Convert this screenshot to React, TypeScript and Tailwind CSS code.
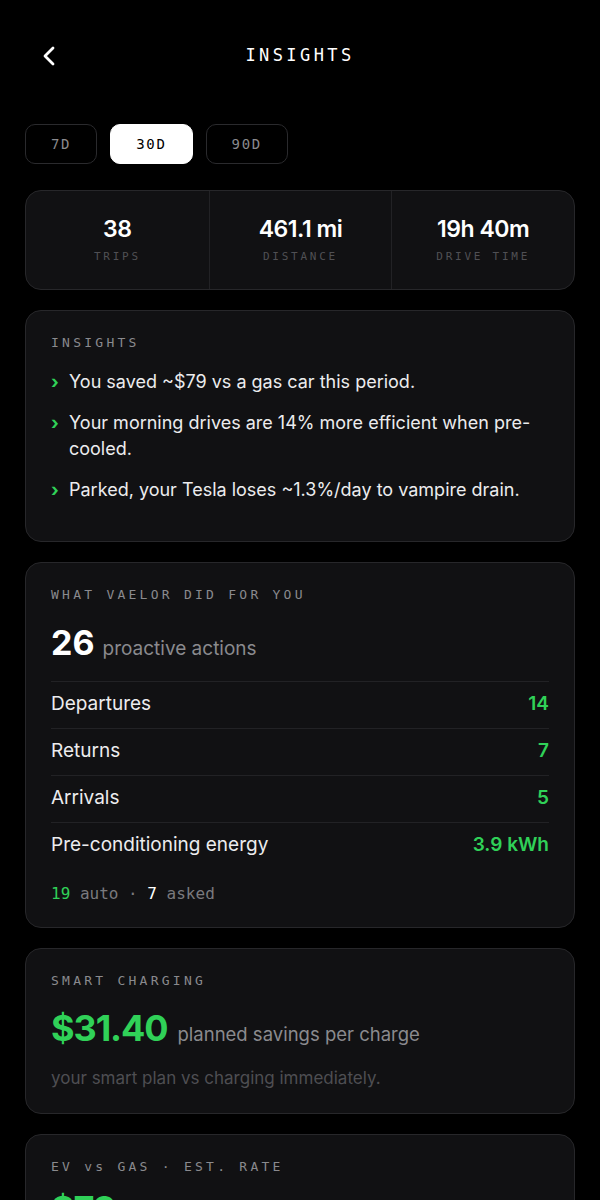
import { ChevronLeft } from "lucide-react";

const mono = "font-['DejaVu_Sans_Mono',monospace]";

function Label({ children }: { children: React.ReactNode }) {
    return (
        <div className={`${mono} text-[13px] leading-4 tracking-[0.25em] text-[#8a8a8e]`}>
            {children}
        </div>
    );
}

export default function App() {
    const stats = [
        { value: "38", label: "TRIPS" },
        { value: "461.1 mi", label: "DISTANCE" },
        { value: "19h 40m", label: "DRIVE TIME" },
    ];

    const insights = [
        "You saved ~$79 vs a gas car this period.",
        "Your morning drives are 14% more efficient when pre-cooled.",
        "Parked, your Tesla loses ~1.3%/day to vampire drain.",
    ];

    const actions = [
        { name: "Departures", value: "14" },
        { name: "Returns", value: "7" },
        { name: "Arrivals", value: "5" },
        { name: "Pre-conditioning energy", value: "3.9 kWh" },
    ];

    return (
        <div className="min-h-screen bg-black text-white font-['Inter',sans-serif] px-[25px] pb-10">
            {/* header */}
            <div className="h-28 grid grid-cols-[1fr_auto_1fr] items-center">
                <ChevronLeft className="w-8 h-8 ml-[8px] text-white" strokeWidth={2.1} />
                <h1 className={`${mono} text-[17px] tracking-[0.2em] text-white`}>INSIGHTS</h1>
                <div />
            </div>

            {/* range tabs */}
            <div className="mt-3 flex gap-[13px]">
                {["7D", "30D", "90D"].map((t) => (
                    <button
                        key={t}
                        className={`${mono} h-10 px-[25px] rounded-[10px] border text-[14px] tracking-[0.12em] ${
                            t === "30D"
                                ? "bg-white border-white text-black"
                                : "bg-black border-[#2a2a2d] text-[#8a8a8e]"
                        }`}
                    >
                        {t}
                    </button>
                ))}
            </div>

            <div className="mt-[26px] flex flex-col gap-5">
                {/* stats */}
                <div className="grid grid-cols-3 rounded-2xl border border-[#27272a] bg-[#111113]">
                    {stats.map((s, i) => (
                        <div
                            key={s.label}
                            className={`flex flex-col items-center pt-6 pb-6 ${i > 0 ? "border-l border-[#222225]" : ""}`}
                        >
                            <div className="text-[23px] leading-7 font-semibold tracking-[-0.02em]">{s.value}</div>
                            <div className={`${mono} mt-[6px] text-[11px] leading-4 tracking-[0.25em] text-[#505054]`}>
                                {s.label}
                            </div>
                        </div>
                    ))}
                </div>

                {/* insights */}
                <div className="rounded-2xl border border-[#27272a] bg-[#111113] px-[25px] pt-6 pb-[38px]">
                    <Label>INSIGHTS</Label>
                    <ul className="mt-[18px] flex flex-col gap-[15px]">
                        {insights.map((t) => (
                            <li key={t} className="flex text-[18px] leading-[26px] text-[#ececee]">
                                <span className="w-[18px] shrink-0 text-[#30d158] font-bold">›</span>
                                <span>{t}</span>
                            </li>
                        ))}
                    </ul>
                </div>

                {/* what vaelor did */}
                <div className="rounded-2xl border border-[#27272a] bg-[#111113] px-[25px] pt-6 pb-[23px]">
                    <Label>WHAT VAELOR DID FOR YOU</Label>
                    <div className="mt-5 flex items-baseline gap-2">
                        <span className="text-[34px] leading-10 font-bold">26</span>
                        <span className="text-[19px] text-[#8a8a8e]">proactive actions</span>
                    </div>
                    <div className="mt-[17px]">
                        {actions.map((a) => (
                            <div
                                key={a.name}
                                className="flex justify-between items-center h-[47px] border-t border-[#222225] text-[19px]"
                            >
                                <span className="text-[#ececee]">{a.name}</span>
                                <span className="text-[#30d158] font-semibold">{a.value}</span>
                            </div>
                        ))}
                    </div>
                    <div className={`${mono} mt-[15px] text-[16px] leading-5 text-[#7a7a7e]`}>
                        <span className="text-[#30d158]">19</span> auto · <span className="text-white">7</span> asked
                    </div>
                </div>

                {/* smart charging */}
                <div className="rounded-2xl border border-[#27272a] bg-[#111113] px-[25px] pt-6 pb-6">
                    <Label>SMART CHARGING</Label>
                    <div className="mt-[17px] flex items-baseline gap-[10px]">
                        <span className="text-[36px] leading-[44px] font-bold text-[#30d158] tracking-[-0.03em]">$31.40</span>
                        <span className="text-[18.5px] text-[#8a8a8e]">planned savings per charge</span>
                    </div>
                    <div className="mt-[17px] text-[17px] leading-[22px] text-[#4e4e52]">
                        your smart plan vs charging immediately.
                    </div>
                </div>

                {/* ev vs gas */}
                <div className="rounded-2xl border border-[#27272a] bg-[#111113] px-[25px] pt-6 pb-6">
                    <Label>EV vs GAS · EST. RATE</Label>
                    <div className="mt-[12px] flex items-baseline gap-[10px]">
                        <span className="text-[36px] leading-[44px] font-bold text-[#30d158] tracking-[-0.03em]">$79</span>
                        <span className="text-[18.5px] text-[#8a8a8e]">saved this period</span>
                    </div>
                </div>
            </div>
        </div>
    );
}
